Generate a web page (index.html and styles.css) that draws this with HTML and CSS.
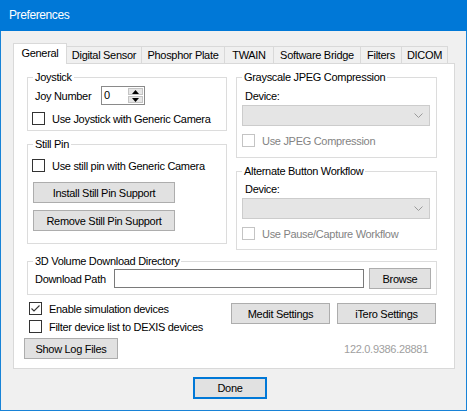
FILE: index.html
```html
<!DOCTYPE html>
<html>
<head>
<meta charset="utf-8">
<title>Preferences</title>
<link rel="stylesheet" href="styles.css">
</head>
<body>
<div class="window">
  <div class="titlebar">Preferences</div>
  <div class="client">
    <div class="tabstrip">
      <div class="tab active t-general">General</div>
      <div class="tab t-digital">Digital Sensor</div>
      <div class="tab t-phosphor">Phosphor Plate</div>
      <div class="tab t-twain">TWAIN</div>
      <div class="tab t-bridge">Software Bridge</div>
      <div class="tab t-filters">Filters</div>
      <div class="tab t-dicom">DICOM</div>
    </div>
    <div class="panel">
      <div class="cols">
        <div class="col">
          <fieldset class="group g-joy">
            <legend>Joystick</legend>
            <div class="body b-joy">
              <div class="row numrow">
                <span class="lbl-joy">Joy Number</span>
                <div class="num">
                  <span class="num-val">0</span>
                  <div class="spin">
                    <span class="spin-btn"><svg width="7" height="4" viewBox="0 0 7 4"><polygon points="3.5,0 7,4 0,4" fill="#000"/></svg></span>
                    <span class="spin-btn"><svg width="7" height="4" viewBox="0 0 7 4"><polygon points="0,0 7,0 3.5,4" fill="#000"/></svg></span>
                  </div>
                </div>
              </div>
              <div class="check mt6"><span class="cb"></span><span>Use Joystick with Generic Camera</span></div>
            </div>
          </fieldset>
          <fieldset class="group g-still">
            <legend>Still Pin</legend>
            <div class="body b-still">
              <div class="check"><span class="cb"></span><span>Use still pin with Generic Camera</span></div>
              <button class="btn pin-btn mt9">Install Still Pin Support</button>
              <button class="btn pin-btn mt7">Remove Still Pin Support</button>
            </div>
          </fieldset>
        </div>
        <div class="col">
          <fieldset class="group g-gray">
            <legend>Grayscale JPEG Compression</legend>
            <div class="body b-gray">
              <div class="dev-lbl">Device:</div>
              <div class="combo mt2"><svg width="9" height="5" viewBox="0 0 9 5"><polyline points="0.5,0.5 4.5,4.5 8.5,0.5" fill="none" stroke="#9a9a9a" stroke-width="1"/></svg></div>
              <div class="check mt7 dis"><span class="cb"></span><span>Use JPEG Compression</span></div>
            </div>
          </fieldset>
          <fieldset class="group g-alt">
            <legend>Alternate Button Workflow</legend>
            <div class="body b-alt">
              <div class="dev-lbl">Device:</div>
              <div class="combo mt2"><svg width="9" height="5" viewBox="0 0 9 5"><polyline points="0.5,0.5 4.5,4.5 8.5,0.5" fill="none" stroke="#9a9a9a" stroke-width="1"/></svg></div>
              <div class="check mt7 dis"><span class="cb"></span><span>Use Pause/Capture Workflow</span></div>
            </div>
          </fieldset>
        </div>
      </div>
      <fieldset class="group g-3d">
        <legend>3D Volume Download Directory</legend>
        <div class="body b-3d">
          <div class="row pathrow">
            <span class="lbl-path">Download Path</span>
            <div class="textbox"></div>
            <button class="btn browse">Browse</button>
          </div>
        </div>
      </fieldset>
      <div class="bottom">
        <div class="bottom-top">
          <div class="checks">
            <div class="check"><span class="cb"><svg width="11" height="11" viewBox="0 0 11 11"><polyline points="1.5,5.5 4,8 9.5,2.5" fill="none" stroke="#333" stroke-width="1.1"/></svg></span><span>Enable simulation devices</span></div>
            <div class="check"><span class="cb"></span><span>Filter device list to DEXIS devices</span></div>
          </div>
          <div class="setbtns">
            <button class="btn set-btn">Medit Settings</button>
            <button class="btn set-btn">iTero Settings</button>
          </div>
        </div>
        <div class="bottom-row2">
          <button class="btn log-btn">Show Log Files</button>
          <span class="version">122.0.9386.28881</span>
        </div>
      </div>
    </div>
    <div class="footer">
      <button class="btn done">Done</button>
    </div>
  </div>
</div>
</body>
</html>
```
FILE: styles.css
```css
* { box-sizing: border-box; }
html, body { margin: 0; padding: 0; }
body {
  width: 467px;
  height: 411px;
  overflow: hidden;
  background: #f0f0f0;
  font-family: "Liberation Sans", Arial, sans-serif;
  font-size: 11px;
  letter-spacing: -0.3px;
  color: #000;
}
.window {
  width: 467px;
  height: 411px;
  border: 1px solid #1883d7;
  border-top: 0;
  display: flex;
  flex-direction: column;
}
.titlebar {
  height: 31px;
  background: #0078d7;
  color: #fff;
  font-size: 12px;
  letter-spacing: -0.4px;
  line-height: 31px;
  padding-left: 9px;
  margin: 0 -1px;
}
.client { padding: 12px 0 0 12px; }

/* tabs */
.tabstrip { display: flex; align-items: flex-end; height: 20px; }
.tab {
  height: 17px;
  line-height: 16px;
  border: 1px solid #d9d9d9;
  border-bottom: 0;
  margin-left: -1px;
  text-align: center;
  background: #f0f0f0;
  white-space: nowrap;
}
.tab.active {
  height: 21px;
  margin-left: 0;
  margin-bottom: -1px;
  background: #fff;
  position: relative;
  z-index: 1;
  padding-top: 1px;
  line-height: 17px;
}
.t-general { width: 54px; }
.t-digital { width: 76px; }
.t-phosphor { width: 84px; }
.t-twain { width: 50px; }
.t-bridge { width: 88px; }
.t-filters { width: 42px; }
.t-dicom { width: 47px; }

.panel {
  width: 442px;
  height: 306px;
  border: 1px solid #d9d9d9;
  background: #fff;
  padding: 7px 17px 0 13px;
}
.cols {
  display: grid;
  grid-template-columns: 200px 201px;
  column-gap: 9px;
  align-items: start;
}
.col { display: flex; flex-direction: column; gap: 7px; }

.group {
  margin: 0;
  padding: 0;
  border: 1px solid #dcdcdc;
  min-width: 0;
}
.group legend {
  padding: 0 2px;
  margin-left: 5px;
  line-height: 13px;
  height: 13px;
}
.g-joy { height: 60px; }
.g-still { height: 106px; }
.g-gray { height: 87px; }
.g-alt { height: 85px; }
.g-3d { height: 40px; margin-top: 5px; }

.body { display: flex; flex-direction: column; align-items: flex-start; }
.b-joy { padding: 2px 0 0 4px; }
.b-still { padding: 7px 0 0 4px; }
.b-gray { padding: 6px 0 0 5px; }
.b-alt { padding: 5px 0 0 5px; }
.b-3d { padding: 0 5px 0 7px; }

.mt2 { margin-top: 2px; }
.mt6 { margin-top: 6px; }
.mt7 { margin-top: 7px; }
.mt9 { margin-top: 9px; }

.row { display: flex; align-items: center; }
.numrow { height: 19px; }
.lbl-joy { width: 66px; margin-left: 3px; }

.num {
  width: 44px;
  height: 19px;
  border: 1px solid #8a8a8a;
  background: #fff;
  display: flex;
}
.num-val { flex: 1; padding-left: 2px; line-height: 17px; }
.spin {
  width: 16px;
  display: flex;
  flex-direction: column;
  padding: 1px 1px 1px 0;
  gap: 1px;
}
.spin-btn {
  flex: 1;
  background: #e6e6e6;
  border: 1px solid #c4c4c4;
  display: flex;
  align-items: center;
  justify-content: center;
}
.spin-btn svg { display: block; }

.check { display: flex; align-items: center; height: 15px; white-space: nowrap; }
.cb {
  width: 13px;
  height: 13px;
  border: 1px solid #333;
  background: #fff;
  margin-right: 7px;
  flex: none;
  display: flex;
  align-items: center;
  justify-content: center;
}
.cb svg { display: block; }
.check.dis { color: #838383; }
.check.dis .cb { border-color: #c4c4c4; }

.btn {
  height: 21px;
  border: 1px solid #adadad;
  background: #e1e1e1;
  font: inherit;
  letter-spacing: inherit;
  color: #000;
  padding: 0;
  margin: 0;
  text-align: center;
}
.pin-btn { width: 142px; margin-left: 1px; }
.pin-btn.mt9 { margin-top: 9px; }
.pin-btn.mt7 { margin-top: 7px; }

.dev-lbl { margin-left: 3px; line-height: 13px; height: 13px; }
.combo {
  width: 188px;
  height: 21px;
  border: 1px solid #cccccc;
  background: #e5e5e5;
  display: flex;
  align-items: center;
  justify-content: flex-end;
  padding-right: 6px;
}
.combo svg { display: block; }

.pathrow { height: 21px; }
.lbl-path { width: 79px; }
.textbox {
  width: 250px;
  height: 19px;
  border: 1px solid #7a7a7a;
  background: #fff;
}
.browse { width: 62px; margin-left: 5px; }

.bottom { padding-top: 6px; }
.bottom-top { display: flex; align-items: flex-start; }
.checks { margin-left: 2px; display: flex; flex-direction: column; gap: 3px; }
.setbtns { margin-left: auto; margin-top: 2px; margin-right: 1px; display: flex; gap: 7px; }
.set-btn { width: 99px; }
.bottom-row2 { display: flex; align-items: center; margin-top: 4px; }
.log-btn { width: 94px; margin-left: -3px; }
.version { margin-left: auto; margin-right: 9px; color: #a0a0a0; }

.footer { padding: 8px 0 0 180px; }
.done {
  width: 74px;
  height: 22px;
  border: 2px solid #0078d7;
}
```
